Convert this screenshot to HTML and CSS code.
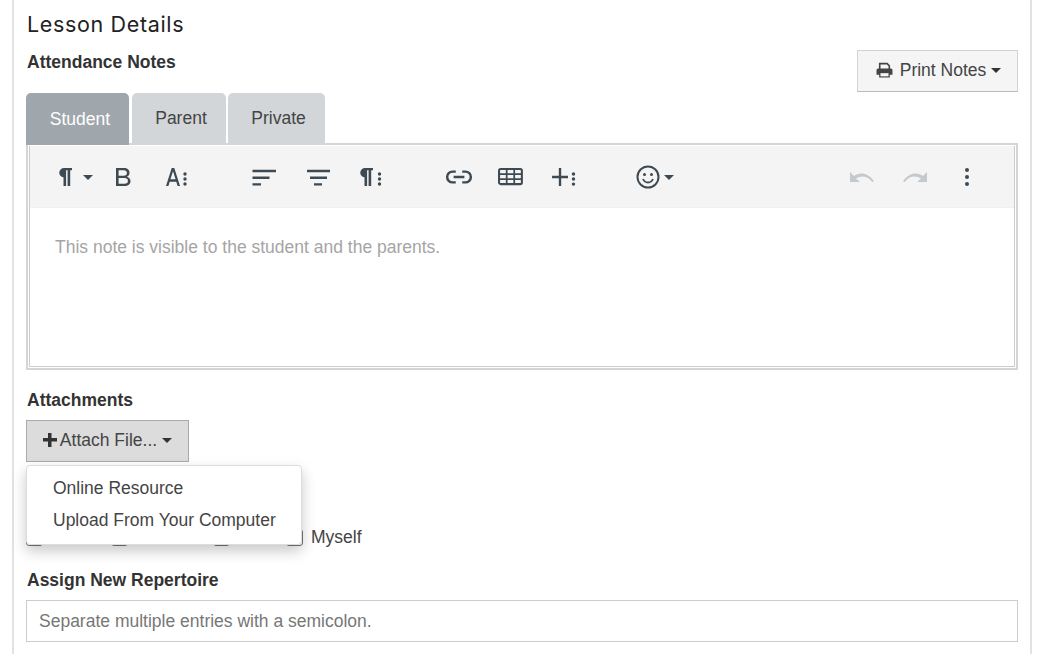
FILE: index.html
```html
<!DOCTYPE html>
<html lang="en">
<head>
<meta charset="utf-8">
<title>Lesson Details</title>
<link rel="stylesheet" href="styles.css">
</head>
<body>
<main class="panel">
  <h2 class="title">Lesson Details</h2>
  <div class="notes-head">
    <div class="label label-notes">Attendance Notes</div>
    <button class="btn btn-print">
      <svg class="ico-print" viewBox="0 0 16 16"><path d="M3.500 6.500V1.500h7l2 2v3" fill="none" stroke="currentColor" stroke-width="1.500"/><path d="M2 6h12a1.500 1.500 0 0 1 1.500 1.500V12H13v2.500H3V12H.5V7.500A1.500 1.500 0 0 1 2 6z" fill="currentColor"/><rect x="4.200" y="10.500" width="7.600" height="3" fill="#f5f5f5"/></svg>
      <span>Print Notes</span><span class="caret"></span>
    </button>
  </div>
  <div class="tabs">
    <div class="tab tab-student active">Student</div>
    <div class="tab tab-parent">Parent</div>
    <div class="tab tab-private">Private</div>
  </div>
  <div class="editor">
    <div class="editor-inner">
      <div class="toolbar">
        <span class="tool t-para"><svg viewBox="5 0 24 24"><path d="M11 3h8v2.200h-1.800V21h-2.600V5.200h-1.500V21h-2.600v-8.500H11a4.750 4.750 0 0 1 0-9.500z"/></svg><span class="tcaret"></span></span>
        <span class="tool t-bold"><svg viewBox="0 0 24 24"><path d="M5 3h8c3.300 0 5.500 2 5.500 4.700 0 1.800-.9 3.200-2.500 4 2.200.7 3.500 2.400 3.500 4.500 0 3-2.500 4.800-5.800 4.800H5zm2.600 2.300v5.500h5.200c2 0 3.100-1.100 3.100-2.800 0-1.600-1.200-2.700-3.100-2.700zm0 7.800v5.600h6c2.200 0 3.300-1 3.300-2.800s-1.300-2.800-3.300-2.800z"/></svg></span>
        <span class="tool t-font"><svg viewBox="0 0 24 24"><path d="M7.700 3L2 21h2.400l1.300-4.300h6.600l1.300 4.300H16L10.300 3zm-1.300 11.300L9 6.200l2.600 8.100z"/><circle cx="21" cy="9" r="1.700"/><circle cx="21" cy="14" r="1.700"/><circle cx="21" cy="19" r="1.700"/></svg></span>
        <span class="tool t-align"><svg viewBox="0 0 24 24"><path d="M.5 4.800H24v2.400H.5zM.5 11.500h17v2.400H.5zM.5 18.200H9v2.400H.5z"/></svg></span>
        <span class="tool t-format"><svg viewBox="0 0 24 24"><path d="M1 4.800h23v2.400H1zM4 11.500h17v2.400H4zM8 18.200h8v2.400H8z"/></svg></span>
        <span class="tool t-pmore"><svg viewBox="0 0 24 24"><path d="M7 3h8v2.200h-1.800V21h-2.600V5.200H9.100V21H6.500v-8.500H7a4.750 4.750 0 0 1 0-9.500z"/><circle cx="21.500" cy="9" r="1.700"/><circle cx="21.500" cy="14" r="1.700"/><circle cx="21.500" cy="19" r="1.700"/></svg></span>
        <span class="tool t-link"><svg class="wide" viewBox="0 0 26 24"><path d="M10 7H7a5 5 0 0 0 0 10h3M16 7h3a5 5 0 0 1 0 10h-3M8 12h10" fill="none" stroke="currentColor" stroke-width="2.300"/></svg></span>
        <span class="tool t-table"><svg class="wide" viewBox="0 0 26 24"><rect x="1.900" y="4.600" width="21.200" height="14" rx="1.500" fill="none" stroke="currentColor" stroke-width="1.900"/><path d="M1.900 9.300h21.200M1.900 14h21.200M9 4.600v14M16 4.600v14" fill="none" stroke="currentColor" stroke-width="1.600"/></svg></span>
        <span class="tool t-plus"><svg class="wide" viewBox="0 0 26 24"><path d="M1.900 10.900h6.300V3.700h2.200v7.200h6.300v2.200h-6.300v7.300H8.200v-7.300H1.900z"/><circle cx="21.800" cy="9.300" r="1.600"/><circle cx="21.800" cy="13.900" r="1.600"/><circle cx="21.800" cy="18.600" r="1.600"/></svg></span>
        <span class="tool t-emoji"><svg viewBox="0 0 24 24"><circle cx="12" cy="12" r="10.500" fill="none" stroke="currentColor" stroke-width="2"/><circle cx="8.500" cy="9.500" r="1.500"/><circle cx="15.500" cy="9.500" r="1.500"/><path d="M7 14c1 2.300 3 3.500 5 3.500s4-1.200 5-3.500" fill="none" stroke="currentColor" stroke-width="1.800"/></svg><span class="tcaret"></span></span>
        <span class="tool t-undo muted"><svg class="wide" viewBox="0 0 26 24"><path d="M1.900 7.400v9.300h9.200l-3.700-3.200c4.600-3 10.600-3 15.100 3.200l1.600-.7C19 8 11 7 5.500 11z"/></svg></span>
        <span class="tool t-redo muted"><svg class="wide" viewBox="0 0 26 24"><path transform="matrix(-1 0 0 1 26 0)" d="M1.900 7.400v9.300h9.200l-3.700-3.200c4.600-3 10.600-3 15.100 3.200l1.600-.7C19 8 11 7 5.500 11z"/></svg></span>
        <span class="tool t-more"><svg viewBox="0 0 24 24"><circle cx="12" cy="5" r="2"/><circle cx="12" cy="12" r="2"/><circle cx="12" cy="19" r="2"/></svg></span>
      </div>
      <div class="editor-body">This note is visible to the student and the parents.</div>
    </div>
  </div>
  <div class="label label-attach">Attachments</div>
  <div class="attach">
    <button class="btn btn-attach"><span class="plus"></span><span>Attach File...</span><span class="caret"></span></button>
    <div class="menu">
      <div class="menu-item">Online Resource</div>
      <div class="menu-item">Upload From Your Computer</div>
    </div>
  </div>
  <div class="checks">
    <span class="check c-student"><span class="box"></span></span>
    <span class="check c-parent"><span class="box"></span></span>
    <span class="check c-tutor"><span class="box"></span></span>
    <label class="check c-myself"><span class="box"></span>Myself</label>
  </div>
  <div class="label label-rep">Assign New Repertoire</div>
  <div class="input">Separate multiple entries with a semicolon.</div>
</main>
</body>
</html>
```

FILE: styles.css
```css
* { box-sizing: border-box; }
html, body { margin: 0; height: 654px; overflow: hidden; background: #fff; }
body { font-family: "Liberation Sans", Arial, sans-serif; font-size: 17.500px; color: #333; }
.panel { width: 1020px; height: 654px; margin-left: 12px; padding: 0 12px; border: solid #e2e2e2; border-width: 0 2px; }
.title { margin: 0; padding: 10px 0 0 1px; height: 41px; font: 400 21.500px/28px Inter, sans-serif; letter-spacing: .65px; color: #222; }
.label { font-weight: 700; font-size: 17.500px; line-height: 22px; color: #333; padding-left: 1px; }
.notes-head { display: flex; justify-content: space-between; align-items: flex-start; height: 52px; }
.label-notes { margin-top: 10px; }
.btn { font: inherit; color: #444; height: 42px; border: 1px solid #d2d2d2; background: #f5f5f5; display: inline-flex; align-items: center; padding: 0 0 2px; }
.btn-print { width: 161px; margin-top: 9px; padding-left: 2px; justify-content: center; border-bottom-color: #bbb; }
.ico-print { width: 17px; height: 17px; margin-right: 7px; }
.caret { display: inline-block; margin-left: 5px; border: 5px solid transparent; border-top-color: #333; border-bottom: 0; }
.tabs { display: flex; height: 50px; position: relative; z-index: 1; }
.tab { height: 50px; border-radius: 5px 5px 0 0; background: #d2d6d9; display: flex; align-items: center; justify-content: center; color: #444; margin-right: 2px; padding-left: 4px; }
.tab-student { width: 103px; background: #9fa6ac; color: #fff; margin-right: 3px; height: 52px; padding-left: 5px; }
.tab-parent { width: 94px; }
.tab-private { width: 97px; }
.editor { height: 227px; border: 2px solid #d2d6d9; padding: 1px; background: #fff; }
.editor-inner { height: 100%; border: 1px solid #ccc; border-top: 0; }
.toolbar { height: 62px; background: #f4f4f4; padding-left: 23px; display: flex; color: #3d4a54; border-bottom: 1px solid #efefef; }
.tool { display: flex; align-items: center; justify-content: center; width: 40px; height: 62px; flex: none; }
.tool svg { fill: currentColor; width: 24px; height: 24px; display: block; }
.tool svg.wide { width: 28px; height: 26px; }
.muted { color: #c3c9cd; }
.tcaret { display: block; flex: none; margin-left: 4px; border: 5px solid transparent; border-top-color: #3d4a54; border-bottom: 0; }
.t-para { width: 44px; }
.t-para .tcaret { margin-left: 1px; }
.t-bold { margin-left: 6px; }
.t-font { margin-left: 13px; }
.t-align { margin-left: 48px; }
.t-format { margin-left: 14px; }
.t-pmore { margin-left: 12px; }
.t-link { margin-left: 49px; }
.t-table { margin-left: 12px; }
.t-plus { margin-left: 13px; }
.t-emoji { margin-left: 51px; }
.t-undo { margin-left: 167px; }
.t-redo { margin-left: 13px; }
.t-more { margin-left: 12px; }
.editor-body { padding: 27px 25px; color: #a5a5a5; line-height: 24px; }
.label-attach { margin-top: 19px; }
.attach { position: relative; margin-top: 9px; height: 42px; }
.btn-attach { width: 163px; justify-content: center; background: #dcdcdc; border-color: #aaa; }
.plus { display: inline-block; width: 14px; height: 14px; margin-right: 3px; background: linear-gradient(#333,#333) center/100% 3.500px no-repeat, linear-gradient(#333,#333) center/3.500px 100% no-repeat; }
.menu { position: absolute; z-index: 5; left: 0; top: 45px; width: 276px; height: 80px; background: #fff; border: 1px solid #ddd; border-radius: 4px; padding: 6px 0; box-shadow: 0 6px 14px rgba(0,0,0,.22); }
.menu-item { height: 32px; line-height: 32px; padding-left: 26px; color: #444; }
.checks { display: flex; height: 24px; margin-top: 63px; align-items: center; color: #444; }
.check { display: flex; align-items: center; }
.box { width: 17px; height: 17px; margin-top: 1px; border: 1px solid #777; border-radius: 3px; margin-right: 8px; background: #fff; }
.c-student { width: 85px; }
.c-parent { width: 102px; }
.c-tutor { width: 73px; }
.label-rep { margin-top: 20px; }
.input { margin-top: 9px; height: 42px; border: 1px solid #ccc; padding-left: 12px; line-height: 40px; color: #777; }
```
